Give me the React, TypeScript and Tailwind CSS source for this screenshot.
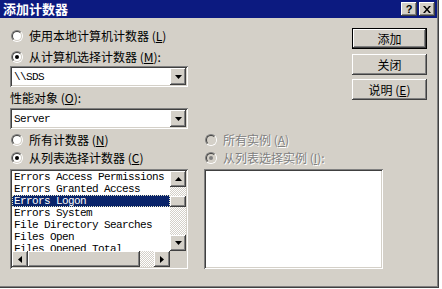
import React from 'react'

const raised =
  'shadow-[inset_-1px_-1px_#404040,inset_1px_1px_#ffffff,inset_-2px_-2px_#808080]'
const sunken =
  'shadow-[inset_1px_1px_#808080,inset_-1px_-1px_#ffffff,inset_2px_2px_#404040,inset_-2px_-2px_#d4d0c8]'
const checker =
  'bg-[repeating-conic-gradient(#ffffff_0_25%,#d4d0c8_0_50%)] bg-[length:2px_2px]'
const cjk = "font-['Noto_Sans_CJK_SC',sans-serif] text-[12px] leading-[16px]"
const mono = "font-['Liberation_Mono',monospace] text-[11px] tracking-[-0.6px] leading-[12px]"

function Radio({ checked, disabled }: { checked?: boolean; disabled?: boolean }) {
  return (
    <span className="flex h-3 w-3 shrink-0 rounded-full border border-t-[#808080] border-l-[#808080] border-b-white border-r-white">
      <span
        className={`flex h-full w-full items-center justify-center rounded-full border border-t-[#404040] border-l-[#404040] border-b-[#d4d0c8] border-r-[#d4d0c8] ${
          disabled ? 'bg-[#d4d0c8]' : 'bg-white'
        }`}
      >
        {checked && <span className={`h-1 w-1 rounded-full ${disabled ? 'bg-[#808080]' : 'bg-black'}`} />}
      </span>
    </span>
  )
}

function RadioRow({
  checked,
  disabled,
  children,
}: {
  checked?: boolean
  disabled?: boolean
  children: React.ReactNode
}) {
  return (
    <div className="flex h-4 items-center gap-[6px] pl-px">
      <Radio checked={checked} disabled={disabled} />
      <span
        className={`${cjk} whitespace-nowrap ${
          disabled ? 'text-[#808080] [text-shadow:1px_1px_0_#ffffff]' : 'text-black'
        }`}
      >
        {children}
      </span>
    </div>
  )
}

function Arrow({ dir }: { dir: 'up' | 'down' | 'left' | 'right' }) {
  const pts = {
    down: '0,0 7,0 3.5,4',
    up: '0,4 7,4 3.5,0',
    left: '4,0 4,7 0,3.5',
    right: '0,0 0,7 4,3.5',
  }[dir]
  const vertical = dir === 'up' || dir === 'down'
  return (
    <svg width={vertical ? 7 : 4} height={vertical ? 4 : 7} viewBox={vertical ? '0 0 7 4' : '0 0 4 7'}>
      <polygon points={pts} fill="#000" />
    </svg>
  )
}

function ScrollButton({ dir }: { dir: 'up' | 'down' | 'left' | 'right' }) {
  return (
    <div className={`flex h-4 w-4 shrink-0 items-center justify-center bg-[#d4d0c8] ${raised}`}>
      <Arrow dir={dir} />
    </div>
  )
}

function Combo({ value }: { value: string }) {
  return (
    <div className={`flex h-[21px] w-[178px] items-center bg-white p-[2px] ${sunken}`}>
      <span className={`${mono} flex-1 pl-[2px] text-black`}>{value}</span>
      <div className={`flex h-[17px] w-4 items-center justify-center bg-[#d4d0c8] ${raised}`}>
        <Arrow dir="down" />
      </div>
    </div>
  )
}

function Button({ label, def }: { label: React.ReactNode; def?: boolean }) {
  return (
    <div
      className={`flex h-[21px] w-[75px] items-center justify-center bg-[#d4d0c8] ${cjk} text-black ${
        def ? 'border border-black' : ''
      } ${raised}`}
    >
      {label}
    </div>
  )
}

const counters = [
  'Errors Access Permissions',
  'Errors Granted Access',
  'Errors Logon',
  'Errors System',
  'File Directory Searches',
  'Files Open',
  'Files Opened Total',
]

function CounterList() {
  return (
    <div className={`flex h-[100px] w-[178px] flex-col bg-white p-[2px] ${sunken}`}>
      <div className="flex h-[80px]">
        <div className="flex-1 overflow-hidden">
          {counters.map((c) => (
            <div
              key={c}
              className={`${mono} h-3 whitespace-nowrap pl-[2px] ${
                c === 'Errors Logon'
                  ? 'bg-[#0a246a] text-white outline-1 outline-dotted outline-[#e8e8c8] -outline-offset-1'
                  : 'text-black'
              }`}
            >
              {c}
            </div>
          ))}
        </div>
        <div className="flex w-4 flex-col">
          <ScrollButton dir="up" />
          <div className={`h-[9px] ${checker}`} />
          <div className={`h-[11px] bg-[#d4d0c8] ${raised}`} />
          <div className={`flex-1 ${checker}`} />
          <ScrollButton dir="down" />
        </div>
      </div>
      <div className="flex h-4">
        <ScrollButton dir="left" />
        <div className={`w-[112px] bg-[#d4d0c8] ${raised}`} />
        <div className={`flex-1 ${checker}`} />
        <ScrollButton dir="right" />
        <div className="w-4 bg-[#d4d0c8]" />
      </div>
    </div>
  )
}

export default function App() {
  return (
    <div className="h-[289px] w-[442px] overflow-hidden bg-white">
      <div className="flex h-[288px] w-[439px] flex-col bg-[#d4d0c8] shadow-[inset_-1px_-1px_#404040,inset_-2px_-2px_#808080]">
        {/* title bar */}
        <div className="flex h-[18px] w-[437px] items-center bg-[#0c1a80] pl-[3px] pr-[2px]">
          <span className="font-['Noto_Sans_CJK_SC',sans-serif] text-[13px] font-bold leading-[18px] text-white">
            添加计数器
          </span>
          <div className="ml-auto flex gap-[2px]">
            <div
              className={`flex h-[14px] w-4 items-center justify-center bg-[#d4d0c8] font-['Liberation_Sans',sans-serif] text-[11px] font-bold leading-none text-black ${raised}`}
            >
              ?
            </div>
            <div className={`flex h-[14px] w-4 items-center justify-center bg-[#d4d0c8] ${raised}`}>
              <svg width="8" height="7" viewBox="0 0 8 7">
                <path d="M0 0h2l2 2.5L6 0h2L5 3.5 8 7H6L4 4.5 2 7H0l3-3.5z" fill="#000" />
              </svg>
            </div>
          </div>
        </div>

        {/* top section */}
        <div className="flex pl-[10px] pt-[10px]">
          <div className="flex w-[178px] flex-col">
            <RadioRow>
              使用本地计算机计数器 (<u>L</u>)
            </RadioRow>
            <div className="mt-[5px]">
              <RadioRow checked>
                从计算机选择计数器 (<u>M</u>):
              </RadioRow>
            </div>
            <div className="mt-px">
              <Combo value={'\\\\SDS'} />
            </div>
            <div className={`mt-[3px] h-4 ${cjk} text-black`}>
              性能对象 (<u>O</u>):
            </div>
            <div className="mt-[2px]">
              <Combo value="Server" />
            </div>
          </div>
          <div className="ml-[164px] flex flex-col gap-[5px]">
            <Button label="添加" def />
            <Button label="关闭" />
            <div className="mt-[-1px]">
              <Button
                label={
                  <span>
                    说明 (<u>E</u>)
                  </span>
                }
              />
            </div>
          </div>
        </div>

        {/* bottom section */}
        <div className="mt-[3px] flex gap-4 pl-[10px]">
          <div className="flex w-[178px] flex-col">
            <RadioRow>
              所有计数器 (<u>N</u>)
            </RadioRow>
            <div className="mt-[2px]">
              <RadioRow checked>
                从列表选择计数器 (<u>C</u>)
              </RadioRow>
            </div>
            <div className="mt-[3px]">
              <CounterList />
            </div>
          </div>
          <div className="flex w-[179px] flex-col">
            <RadioRow disabled>
              所有实例 (<u>A</u>)
            </RadioRow>
            <div className="mt-[2px]">
              <RadioRow checked disabled>
                从列表选择实例 (<u>I</u>):
              </RadioRow>
            </div>
            <div className={`mt-[3px] h-[100px] w-[179px] bg-white ${sunken}`} />
          </div>
        </div>
      </div>
    </div>
  )
}
